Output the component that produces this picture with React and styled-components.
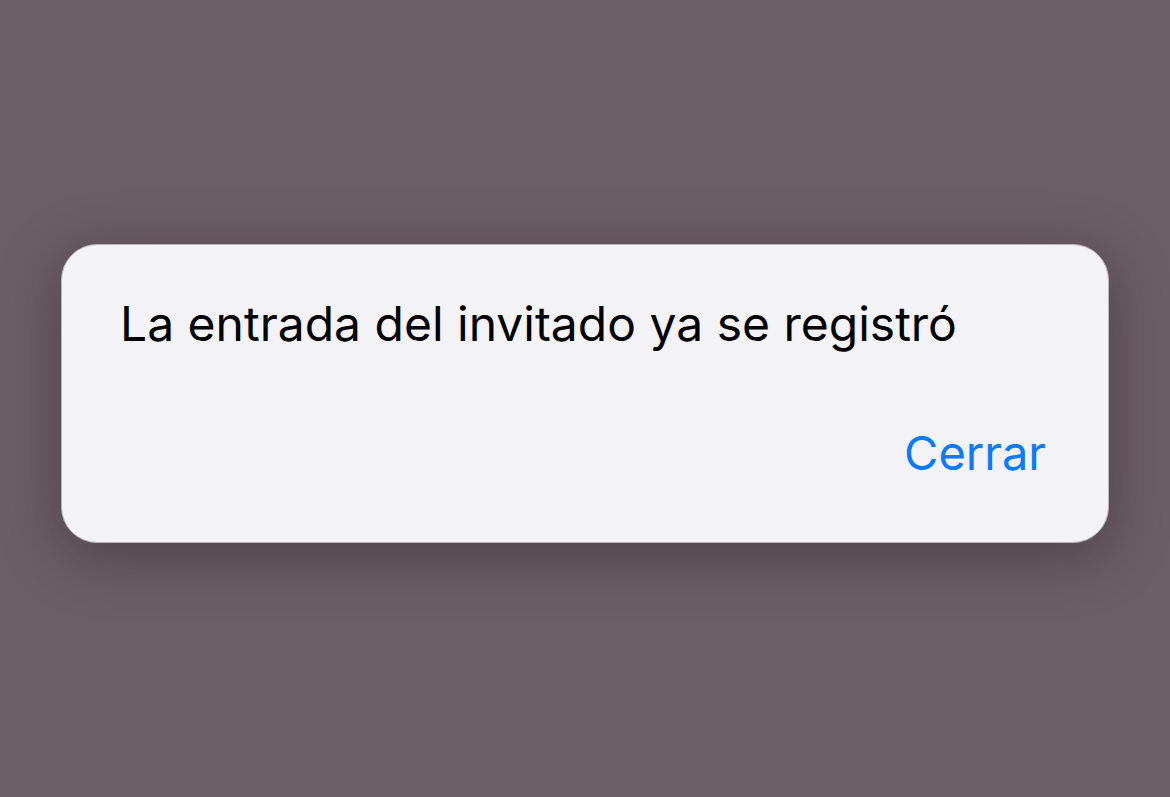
import React from "react";
import styled, { createGlobalStyle } from "styled-components";

const Global = createGlobalStyle`
  html, body { margin: 0; padding: 0; }
  body { background: #6c5f65; font-family: Inter, "Noto Sans", sans-serif; }
`;

const Screen = styled.div`
  width: 1170px;
  height: 797px;
  box-sizing: border-box;
  padding: 244px 61px 0 61px;
  background: #6c5f65;
`;

const Dialog = styled.div`
  box-sizing: border-box;
  height: 299px;
  background: #f2f2f7;
  border-radius: 36px;
  border: 1px solid #b9b4b7;
  box-shadow: 0 12px 60px rgba(40, 25, 35, 0.45);
  padding: 47px 62px 0 58px;
  display: flex;
  flex-direction: column;
`;

const Message = styled.p`
  margin: 0;
  font-size: 48px;
  line-height: 64px;
  color: #000;
  letter-spacing: 0;
`;

const Actions = styled.div`
  display: flex;
  justify-content: flex-end;
  margin-top: 65px;
`;

const ActionButton = styled.button`
  border: none;
  background: none;
  padding: 0;
  font-family: inherit;
  font-size: 47px;
  line-height: 64px;
  color: #0a7aff;
  cursor: pointer;
`;

export default function App() {
  return (
    <>
      <Global />
      <Screen>
        <Dialog>
          <Message>La entrada del invitado ya se registró</Message>
          <Actions>
            <ActionButton>Cerrar</ActionButton>
          </Actions>
        </Dialog>
      </Screen>
    </>
  );
}
